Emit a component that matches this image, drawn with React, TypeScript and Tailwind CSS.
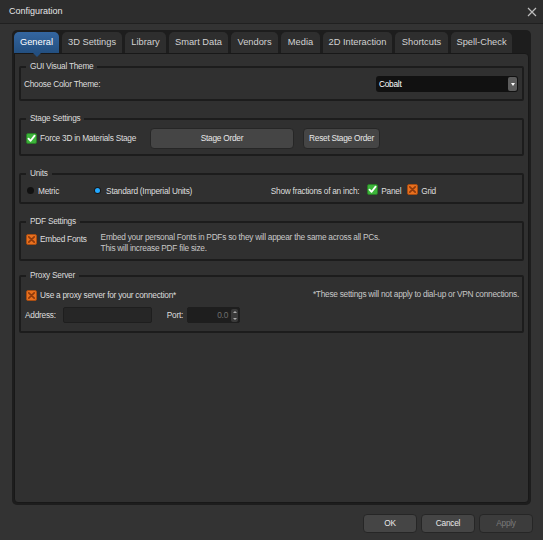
import React from "react";

const tabs: [string, number][] = [
  ["General", 45],
  ["3D Settings", 60],
  ["Library", 41],
  ["Smart Data", 59],
  ["Vendors", 47],
  ["Media", 39],
  ["2D Interaction", 69],
  ["Shortcuts", 53],
  ["Spell-Check", 61],
];

function GreenCheck() {
  return (
    <span className="inline-flex h-[11px] w-[11px] shrink-0 items-center justify-center rounded-[2px] bg-[#3cb43a] border border-[#2a7d27]">
      <svg width="9" height="9" viewBox="0 0 9 9">
        <path d="M1.5 4.6 L3.6 6.8 L7.6 1.6" stroke="#ffffff" strokeWidth="1.8" fill="none" strokeLinecap="round" strokeLinejoin="round" />
      </svg>
    </span>
  );
}

function OrangeX() {
  return (
    <span className="inline-flex h-[11px] w-[11px] shrink-0 items-center justify-center rounded-[2px] bg-[#e8701e] border border-[#a84d12]">
      <svg width="9" height="9" viewBox="0 0 9 9">
        <path d="M1.8 1.8 L7.2 7.2 M7.2 1.8 L1.8 7.2" stroke="#8e3a0c" strokeWidth="1.7" fill="none" strokeLinecap="round" />
      </svg>
    </span>
  );
}

function Group({ title, className, children }: { title: string; className?: string; children: React.ReactNode }) {
  return (
    <div className={`border-2 border-[#1c1c1c] rounded-[2px] ${className ?? ""}`}>
      <div className="-mt-[8px] ml-[5px] w-fit whitespace-nowrap bg-[#303030] px-[4px] leading-[12px] text-[#dcdcdc]">{title}</div>
      {children}
    </div>
  );
}

function Btn({ label, className, dim }: { label: string; className?: string; dim?: boolean }) {
  return (
    <div
      className={`flex items-center justify-center whitespace-nowrap rounded-[4px] border border-[#262626] ${dim ? "bg-[#3c3c3c] text-[#7a7a7a]" : "bg-[#454545] text-[#e8e8e8]"} ${className ?? ""}`}
    >
      {label}
    </div>
  );
}

export default function App() {
  return (
    <div
      className="flex h-[540px] w-[543px] flex-col whitespace-nowrap bg-[#333333] text-[8.3px] tracking-[-0.25px] text-[#dedede]"
      style={{ fontFamily: '"Segoe UI", "Liberation Sans", Arial, sans-serif' }}
    >
      {/* Title bar */}
      <div className="flex h-[24px] shrink-0 items-center justify-between border-b border-[#202020] bg-[#2d2d2d] pl-[9px] pr-[6px]">
        <span className="text-[9px] tracking-normal text-[#e6e6e6]">Configuration</span>
        <svg width="10" height="10" viewBox="0 0 10 10">
          <path d="M1 1 L9 9 M9 1 L1 9" stroke="#bdbdbd" strokeWidth="1.2" />
        </svg>
      </div>

      {/* Tab frame */}
      <div className="mx-[12px] mt-[6px] flex h-[475px] flex-col rounded-[5px] bg-[#1d1d1d] p-[2px]">
        <div className="flex h-[21px] shrink-0 gap-[3px]">
          {tabs.map(([t, w], i) => (
            <div
              key={t}
              style={{ width: w }}
              className={`relative flex items-center justify-center rounded-t-[5px] text-[9.3px] tracking-normal ${
                i === 0
                  ? "bg-gradient-to-b from-[#3466a0] to-[#234f80] text-white"
                  : "bg-[#2e2e2e] text-[#d2d2d2]"
              }`}
            >
              {t}
              {i === 0 && (
                <span className="absolute left-1/2 top-full -ml-[4px] h-0 w-0 border-x-[4px] border-t-[4px] border-x-transparent border-t-[#234f80]" />
              )}
            </div>
          ))}
        </div>

        {/* Content pane */}
        <div className="flex flex-1 flex-col rounded-b-[4px] rounded-tr-[4px] border border-[#181818] bg-[#303030] px-[4px] pt-[12px]">
          <Group title="GUI Visual Theme" className="h-[35px]">
            <div className="flex items-center justify-between pl-[3px] pr-[4px] pt-[4px]">
              <span>Choose Color Theme:</span>
              <div className="flex h-[16px] w-[142px] items-center justify-between rounded-[3px] bg-[#111111] pl-[3px] pr-[1px]">
                <span className="text-white">Cobalt</span>
                <span className="flex h-[14px] w-[9px] items-center justify-center rounded-[2px] bg-[#5c5c5c]">
                  <span className="h-0 w-0 border-x-[2.5px] border-t-[3px] border-x-transparent border-t-white" />
                </span>
              </div>
            </div>
          </Group>

          <Group title="Stage Settings" className="mt-[17px] h-[38px]">
            <div className="flex items-center pl-[5px] pt-[4px]">
              <GreenCheck />
              <span className="ml-[3px] w-[110px]">Force 3D in Materials Stage</span>
              <Btn label="Stage Order" className="h-[21px] w-[144px]" />
              <Btn label="Reset Stage Order" className="ml-[9px] h-[21px] w-[77px]" />
            </div>
          </Group>

          <Group title="Units" className="mt-[17px] h-[31px]">
            <div className="flex items-center pl-[6px] pt-[5px]">
              <span className="h-[7px] w-[7px] rounded-full bg-[#111111]" />
              <span className="ml-[4px]">Metric</span>
              <span className="ml-[35px] flex h-[7px] w-[7px] items-center justify-center rounded-full bg-[#1a1a1a]">
                <span className="h-[5px] w-[5px] rounded-full bg-[#22a8ff]" />
              </span>
              <span className="ml-[5px]">Standard (Imperial Units)</span>
              <span className="ml-auto">Show fractions of an inch:</span>
              <span className="ml-[8px]"><GreenCheck /></span>
              <span className="ml-[3px]">Panel</span>
              <span className="ml-[6px]"><OrangeX /></span>
              <span className="ml-[3px] mr-[86px]">Grid</span>
            </div>
          </Group>

          <Group title="PDF Settings" className="mt-[17px] h-[40px]">
            <div className="flex pl-[5px] pt-[6px]">
              <div className="flex items-center self-start">
                <OrangeX />
                <span className="ml-[3px]">Embed Fonts</span>
              </div>
              <div className="-mt-[1px] ml-[14px] leading-[11px] text-[#c8c8c8]">
                <div>Embed your personal Fonts in PDFs so they will appear the same across all PCs.</div>
                <div>This will increase PDF file size.</div>
              </div>
            </div>
          </Group>

          <Group title="Proxy Server" className="mt-[14px] h-[58px]">
            <div className="flex items-center justify-between pl-[5px] pr-[3px] pt-[8px]">
              <div className="flex items-center">
                <OrangeX />
                <span className="ml-[3px]">Use a proxy server for your connection*</span>
              </div>
              <span className="-mt-[2px] text-[#c8c8c8]">*These settings will not apply to dial-up or VPN connections.</span>
            </div>
            <div className="mt-[6px] flex items-center pl-[4px]">
              <span>Address:</span>
              <div className="ml-[7px] h-[16px] w-[89px] rounded-[2px] border border-[#1e1e1e] bg-[#262626]" />
              <span className="ml-[15px]">Port:</span>
              <div className="ml-[4px] flex h-[16px] w-[53px] items-center justify-end rounded-[2px] border border-[#1e1e1e] bg-[#1e1e1e] pr-[1px]">
                <span className="mr-[3px] text-[#6e6e6e]">0.0</span>
                <div className="flex h-[13px] w-[7px] flex-col items-center justify-around rounded-[2px] bg-[#3a3a3a]">
                  <span className="h-0 w-0 border-x-[2px] border-b-[2px] border-x-transparent border-b-[#aaaaaa]" />
                  <span className="h-0 w-0 border-x-[2px] border-t-[2px] border-x-transparent border-t-[#aaaaaa]" />
                </div>
              </div>
            </div>
          </Group>
        </div>
      </div>

      {/* Footer */}
      <div className="flex justify-end gap-[4px] pr-[10px] pt-[9px]">
        <Btn label="OK" className="h-[19px] w-[54px]" />
        <Btn label="Cancel" className="h-[19px] w-[54px]" />
        <Btn label="Apply" className="h-[19px] w-[54px]" dim />
      </div>
    </div>
  );
}
